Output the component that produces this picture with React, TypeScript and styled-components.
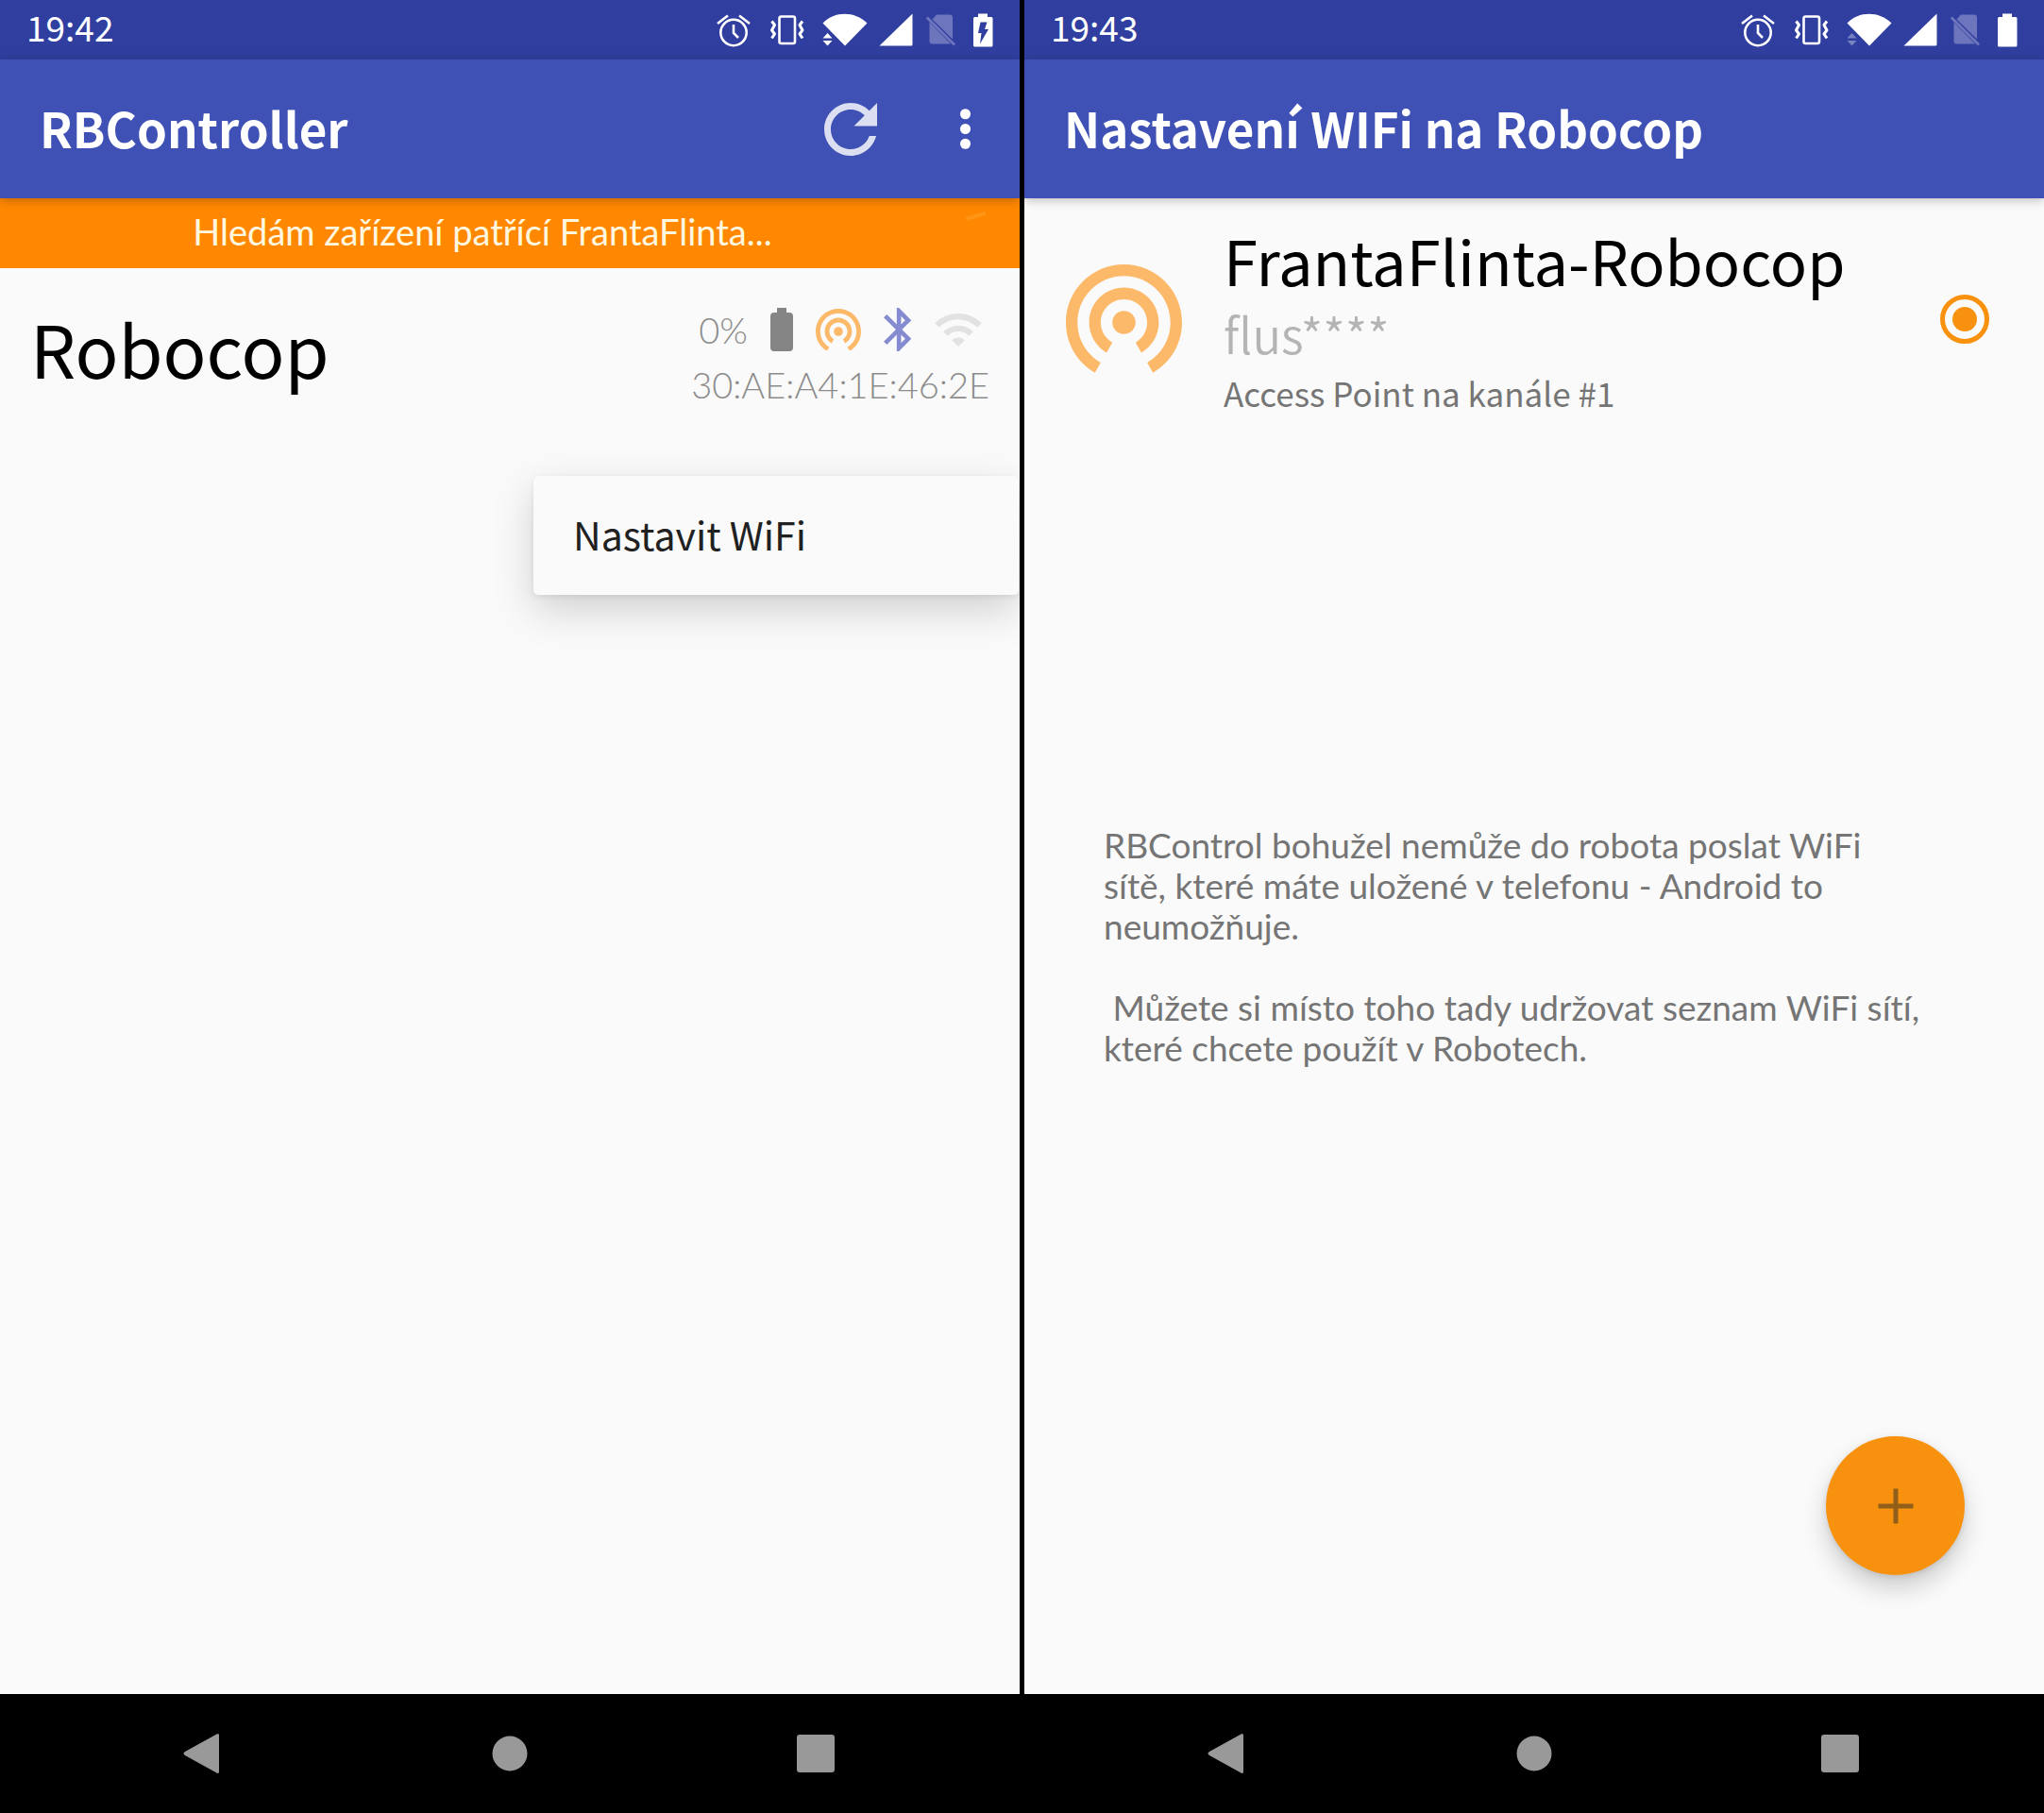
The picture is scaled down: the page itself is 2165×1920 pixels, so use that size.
import React from "react";
import styled, { createGlobalStyle } from "styled-components";

const GlobalStyle = createGlobalStyle`
  * { box-sizing: border-box; }
  body { margin: 0; background: #000; }
  button { font: inherit; color: inherit; border: 0; padding: 0; background: none; cursor: pointer; }
  h1, h2, p { margin: 0; }
  svg { display: block; flex: none; }
`;

const Screens = styled.div`
  display: grid;
  grid-template-columns: 1fr 1fr;
  gap: 5px;
  min-height: 100vh;
  background: #000;
  font-family: "Noto Sans CJK SC", "Noto Sans", sans-serif;
  font-size: 37px;
  line-height: 43px;
`;

const Phone = styled.section`
  display: flex;
  flex-direction: column;
  min-width: 0;
  overflow: hidden;
  background: #fafafa;
`;

const StatusBar = styled.div`
  display: flex;
  align-items: center;
  justify-content: space-between;
  height: 63px;
  padding: 0 23px 0 28px;
  background: #303f9f;
  color: #fff;
`;

const Clock = styled.time`
  padding-bottom: 6px;
`;

const StatusIcons = styled.div`
  display: flex;
  align-items: center;
  gap: 12px;
`;

const AppBar = styled.header`
  position: relative;
  display: flex;
  align-items: center;
  height: 147px;
  padding: 0 26px 0 42px;
  background: #3f51b5;
  color: #fff;
  box-shadow: 0 2px 10px rgba(0, 0, 0, 0.25);
`;

const AppTitle = styled.h1`
  flex: 1;
  padding-bottom: 3px;
  font-size: 51px;
  line-height: 64px;
  font-weight: 700;
`;

const BarActions = styled.div`
  display: flex;
  align-items: center;
  gap: 48px;
`;

const Banner = styled.div`
  display: flex;
  align-items: center;
  height: 74px;
  padding: 0 30px 4px 0;
  background: #ff8800;
  color: #fff8e1;
`;

const BannerText = styled.p`
  flex: 1;
  text-align: center;
  font-family: Lato, sans-serif;
  font-size: 38px;
`;

const Content = styled.main`
  position: relative;
  flex: 1;
  display: grid;
  grid-template-columns: minmax(0, 1fr);
`;

const RobotRow = styled.div`
  display: flex;
  align-items: flex-start;
  justify-content: space-between;
  padding: 40px 32px 34px;
`;

const RobotName = styled.h2`
  font-size: 76px;
  line-height: 88px;
  font-weight: 400;
  color: #000;
`;

const RobotInfo = styled.div`
  display: flex;
  flex-direction: column;
  gap: 12px;
  color: #8c8c8c;
  font-family: Lato, sans-serif;
  font-size: 38px;
  font-weight: 300;
`;

const RobotState = styled.div`
  display: flex;
  align-items: center;
  justify-content: space-between;
  height: 50px;
  padding: 0 8px;
`;

const Popup = styled.div`
  position: absolute;
  top: 220px;
  right: 1px;
  width: 514px;
  border-radius: 5px;
  background: #fafafa;
  box-shadow: 0 16px 44px rgba(0, 0, 0, 0.17), 0 2px 6px rgba(0, 0, 0, 0.08);
`;

const PopupItem = styled.button`
  display: block;
  width: 100%;
  height: 126px;
  padding: 0 42px 3px;
  text-align: left;
  font-size: 41px;
  color: #212121;
`;

const Network = styled.label`
  grid-area: 1 / 1;
  align-self: start;
  display: flex;
  align-items: center;
  padding: 28px 58px 20px 44px;
`;

const NetworkText = styled.span`
  flex: 1;
  display: flex;
  flex-direction: column;
  padding-left: 44px;
`;

const NetworkName = styled.span`
  font-size: 65px;
  line-height: 74px;
  color: #000;
`;

const NetworkPassword = styled.span`
  font-size: 51px;
  line-height: 82px;
  font-weight: 350;
  color: #b4b4b4;
`;

const NetworkKind = styled.span`
  font-size: 35px;
  color: #757575;
`;

const Radio = styled.input`
  appearance: none;
  display: grid;
  place-items: center;
  width: 52px;
  height: 52px;
  margin: 0;
  border: 5px solid #f8920e;
  border-radius: 50%;
  &::before {
    content: "";
    width: 26px;
    height: 26px;
    border-radius: 50%;
  }
  &:checked::before { background: #f8920e; }
`;

const Hint = styled.div`
  grid-area: 1 / 1;
  align-self: center;
  display: flex;
  flex-direction: column;
  gap: 43px;
  padding: 0 126px 0 84px;
  color: #757575;
  font-family: Lato, sans-serif;
  font-variant-ligatures: none;
  white-space: pre-wrap;
  pointer-events: none;
`;

const AddButton = styled.button`
  position: absolute;
  right: 84px;
  bottom: 126px;
  display: grid;
  place-items: center;
  width: 147px;
  height: 147px;
  border-radius: 50%;
  background: #f8920e;
  box-shadow: 0 14px 26px rgba(0, 0, 0, 0.18), 0 2px 6px rgba(0, 0, 0, 0.1);
`;

const NavBar = styled.nav`
  display: flex;
  align-items: center;
  justify-content: center;
  gap: 244px;
  height: 126px;
  background: #000;
`;

const NavButton = styled.button`
  display: grid;
  place-items: center;
  width: 80px;
  height: 80px;
`;

const AlarmIcon = () => (
  <svg width="44" height="36" viewBox="0 0 44 36" fill="none" stroke="#fff" strokeWidth="2.6">
    <circle cx="22" cy="20.500" r="13.700" />
    <path d="M22 12v9l5 5" />
    <path d="M5 11l11-8.500M39 11L28 2.500" />
  </svg>
);

const VibrateIcon = () => (
  <svg width="48" height="36" viewBox="0 0 48 36" fill="none" stroke="#fff" strokeWidth="2.6">
    <rect x="14.500" y="3.500" width="16.500" height="28.500" rx="2" />
    <path d="M6.500 8.500l3 4-3 5.500 3 4-3 4.500M39 8.500l-3 4 3 5.500-3 4 3 4.500" strokeLinejoin="round" strokeWidth="3" />
  </svg>
);

const SignalWifiIcon = ({ dim }: { dim?: boolean }) => (
  <svg width="48" height="36" viewBox="0 0 48 36" fill="#fff">
    <path d="M0.500 10.500C13-2.500 34-2.500 47.500 10.500L24 34.500z" />
    <path d="M0.500 26.500l5-5.500 5 5.500z M0.500 29h10l-5 5.500z" opacity={dim ? 0.35 : 1} />
  </svg>
);

const CellIcon = () => (
  <svg width="36" height="36" viewBox="0 0 36 36" fill="#fff">
    <path d="M35.500 .5V33q0 1.500-1.500 1.500H0.500z" />
  </svg>
);

const NoSimIcon = () => (
  <svg width="34" height="36" viewBox="0 0 34 36" fill="#6d75bd">
    <path d="M13 1.500h14q3 0 3 3V27.500L8.500 6.500zM5.500 9.500L28 32.500H8.500q-3 0-3-3z" />
    <path d="M3.800 3.500L1.800 5.500 31 34.500l2-2z" />
  </svg>
);

const PhoneBatteryIcon = ({ charging }: { charging?: boolean }) => (
  <svg width="32" height="36" viewBox="-5 0 32 36">
    <path d="M6 .5h10v3.500h4q1.500 0 1.500 1.500V34q0 1.500-1.500 1.500H2.500Q1 35.500 1 34V5.500Q1 4 2.500 4H6z" fill="#fff" />
    {charging && <path d="M8.500 9.500h7l-2.500 7.500h4L8 32.500l1.500-11.500H6z" fill="#303f9f" />}
  </svg>
);

const RefreshIcon = () => (
  <svg width="84" height="84" viewBox="0 0 24 24" fill="#fff" opacity="0.82">
    <path d="M17.650 6.350C16.200 4.900 14.210 4 12 4c-4.420 0-7.990 3.580-7.990 8s3.570 8 7.990 8c3.730 0 6.840-2.550 7.730-6h-2.080c-.82 2.330-3.040 4-5.650 4-3.310 0-6-2.690-6-6s2.690-6 6-6c1.660 0 3.140.69 4.220 1.780L13 11h7V4l-2.350 2.350z" />
  </svg>
);

const MoreIcon = () => (
  <svg width="63" height="63" viewBox="0 0 24 24" fill="#fff">
    <circle cx="12" cy="6" r="2.100" />
    <circle cx="12" cy="12" r="2.100" />
    <circle cx="12" cy="18" r="2.100" />
  </svg>
);

const SpinnerIcon = () => (
  <svg width="28" height="42" viewBox="0 0 28 42" fill="none" stroke="#ff9416" strokeWidth="4">
    <path d="M1 8q10-3 21-6" />
  </svg>
);

const BatteryIcon = () => (
  <svg width="24" height="46" viewBox="0 0 24 46" fill="#858585">
    <path d="M7 0h10v5h3q4 0 4 4v33q0 4-4 4H4q-4 0-4-4V9q0-4 4-4h3z" />
  </svg>
);

const HotspotIcon = ({ size }: { size: number }) => (
  <svg width={size} viewBox="2 3 20 18.650" fill="#fdb96a">
    <path d="M12 11c-1.100 0-2 .9-2 2s.9 2 2 2 2-.9 2-2-.9-2-2-2zm6 2c0-3.310-2.690-6-6-6s-6 2.690-6 6c0 2.220 1.210 4.150 3 5.190l1-1.740c-1.190-.7-2-1.970-2-3.450 0-2.210 1.790-4 4-4s4 1.790 4 4c0 1.480-.81 2.750-2 3.450l1 1.740c1.790-1.040 3-2.970 3-5.190zM12 3C6.480 3 2 7.480 2 13c0 3.700 2.010 6.920 4.990 8.650l1-1.730C5.610 18.530 4 15.960 4 13c0-4.420 3.580-8 8-8s8 3.580 8 8c0 2.960-1.610 5.530-4 6.920l1 1.730c2.990-1.730 5-4.950 5-8.650 0-5.520-4.480-10-10-10z" />
  </svg>
);

const BluetoothIcon = () => (
  <svg width="30" height="46" viewBox="5 2 13 20" fill="#858bd0">
    <path d="M17.710 7.710L12 2h-1v7.590L6.410 5 5 6.410 10.590 12 5 17.590 6.410 19 11 14.410V22h1l5.710-5.710-4.300-4.290 4.300-4.290zM13 5.830l1.880 1.880L13 9.590V5.830zm1.880 10.460L13 18.170v-3.760l1.880 1.880z" />
  </svg>
);

const WifiIcon = () => (
  <svg width="50" height="36" viewBox="1 4 22 16" fill="#e2e2e2">
    <path d="M1 9l2 2c4.970-4.970 13.030-4.970 18 0l2-2C16.930 2.930 7.080 2.930 1 9zm8 8l3 3 3-3c-1.650-1.660-4.340-1.660-6 0zm-4-4l2 2c2.760-2.760 7.240-2.760 10 0l2-2C15.140 9.140 8.870 9.140 5 13z" />
  </svg>
);

const PlusIcon = () => (
  <svg width="38" height="38" viewBox="0 0 38 38" stroke="#925f1b" strokeWidth="5">
    <path d="M19 .5v37M.5 19h37" />
  </svg>
);

const StatusRow = ({ time, charging }: { time: string; charging?: boolean }) => (
  <StatusBar>
    <Clock>{time}</Clock>
    <StatusIcons>
      <AlarmIcon />
      <VibrateIcon />
      <SignalWifiIcon dim={!charging} />
      <CellIcon />
      <NoSimIcon />
      <PhoneBatteryIcon charging={charging} />
    </StatusIcons>
  </StatusBar>
);

const Navigation = () => (
  <NavBar>
    <NavButton aria-label="Zpět">
      <svg width="46" height="44" viewBox="0 0 46 44" fill="#999">
        <path d="M36.500 1.500Q39 0 39 3v38q0 3-2.500 1.500L3 24Q0 22 3 20z" />
      </svg>
    </NavButton>
    <NavButton aria-label="Domů">
      <svg width="38" height="38" viewBox="0 0 38 38" fill="#999">
        <circle cx="19" cy="19" r="18.500" />
      </svg>
    </NavButton>
    <NavButton aria-label="Přehled">
      <svg width="40" height="40" viewBox="0 0 40 40" fill="#999">
        <rect width="40" height="40" rx="3" />
      </svg>
    </NavButton>
  </NavBar>
);

export default function App() {
  return (
    <>
      <GlobalStyle />
      <Screens>
        <Phone>
          <StatusRow time="19:42" charging />
          <AppBar>
            <AppTitle>RBController</AppTitle>
            <BarActions>
              <button aria-label="Obnovit"><RefreshIcon /></button>
              <button aria-label="Další možnosti"><MoreIcon /></button>
            </BarActions>
          </AppBar>
          <Banner>
            <BannerText>Hledám zařízení patřící FrantaFlinta...</BannerText>
            <SpinnerIcon />
          </Banner>
          <Content>
            <RobotRow>
              <RobotName>Robocop</RobotName>
              <RobotInfo>
                <RobotState>
                  <span>0%</span>
                  <BatteryIcon />
                  <HotspotIcon size={48} />
                  <BluetoothIcon />
                  <WifiIcon />
                </RobotState>
                <span>30:AE:A4:1E:46:2E</span>
              </RobotInfo>
            </RobotRow>
            <Popup>
              <PopupItem>Nastavit WiFi</PopupItem>
            </Popup>
          </Content>
          <Navigation />
        </Phone>
        <Phone>
          <StatusRow time="19:43" />
          <AppBar>
            <AppTitle>Nastavení WIFi na Robocop</AppTitle>
          </AppBar>
          <Content>
            <Network>
              <HotspotIcon size={123} />
              <NetworkText>
                <NetworkName>FrantaFlinta-Robocop</NetworkName>
                <NetworkPassword>flus****</NetworkPassword>
                <NetworkKind>Access Point na kanále #1</NetworkKind>
              </NetworkText>
              <Radio type="radio" name="network" defaultChecked />
            </Network>
            <Hint>
              <p>RBControl bohužel nemůže do robota poslat WiFi sítě, které máte uložené v telefonu - Android to neumožňuje.</p>
              <p>{" Můžete si místo toho tady udržovat seznam WiFi sítí, které chcete použít v Robotech."}</p>
            </Hint>
            <AddButton aria-label="Přidat síť"><PlusIcon /></AddButton>
          </Content>
          <Navigation />
        </Phone>
      </Screens>
    </>
  );
}
